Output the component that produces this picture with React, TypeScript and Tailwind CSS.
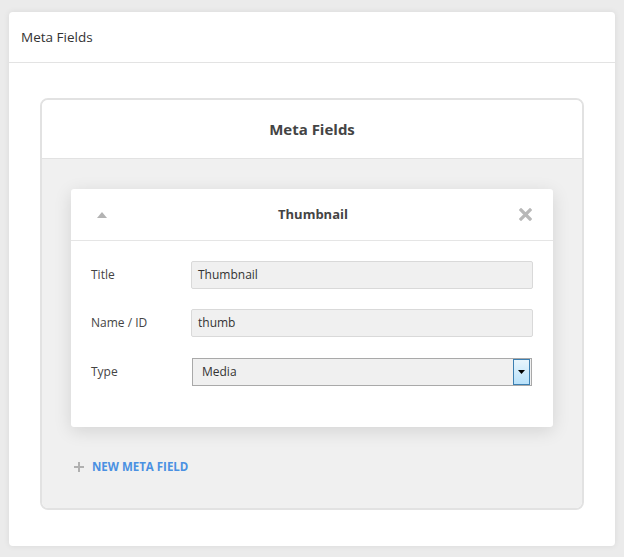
const font = { fontFamily: '"Open Sans", "Liberation Sans", sans-serif' };

/* ─── Labelled row ───────────────────────────────────────── */
function Row({ label, children }: { label: string; children: React.ReactNode }) {
  return (
    <div className="flex items-center">
      <div className="w-[100px] text-[12px] text-[#444]">{label}</div>
      <div className="flex-1">{children}</div>
    </div>
  );
}

function TextBox({ value }: { value: string }) {
  return (
    <div className="flex h-[28px] items-center rounded-[2px] border border-[#d9d9d9] bg-[#f0f0f0] px-[6px] text-[12px] text-[#333]">
      {value}
    </div>
  );
}

function SelectBox({ value }: { value: string }) {
  return (
    <div className="ml-px mr-px flex h-[28px] items-center border border-[#a9a9a9] bg-[#f0f0f0] pl-[9px] text-[12px] text-[#333]">
      <span className="flex-1">{value}</span>
      <span className="mr-px flex h-[26px] w-[17px] items-center justify-center border border-[#3c7fb1] bg-gradient-to-b from-[#e8f5fc] to-[#b8e1fa]">
        <svg width="7" height="4" viewBox="0 0 7 4">
          <path d="M0 0h7L3.5 4z" fill="#000" />
        </svg>
      </span>
    </div>
  );
}

export default function App() {
  return (
    <div style={font} className="min-h-[557px] w-[624px] bg-[#ebebeb] px-[9px] pt-[12px] pb-[13px]">
      <div className="rounded-[4px] bg-white shadow-[0_0_6px_rgba(0,0,0,0.08)]">
        <div className="flex h-[51px] items-center border-b border-[#e3e3e3] px-[12px] text-[13.5px] text-[#333]">
          Meta Fields
        </div>

        <div className="px-[31px] pt-[35px] pb-[36px]">
          <div className="overflow-hidden rounded-[8px] border-2 border-[#e2e2e2]">
            <div className="flex h-[59px] items-center justify-center border-b border-[#e2e2e2] bg-white text-[15px] font-bold text-[#444]">
              Meta Fields
            </div>

            <div className="bg-[#f0f0f0] px-[29px] pt-[30px] pb-[33px]">
              <div className="rounded-[3px] bg-white shadow-[0_4px_18px_rgba(0,0,0,0.12)]">
                <div className="flex h-[52px] items-center border-b border-[#e5e5e5] pl-[26px] pr-[21px]">
                  <svg width="10" height="6" viewBox="0 0 10 6">
                    <path d="M0 6L5 0l5 6z" fill="#b3b3b3" />
                  </svg>
                  <div className="flex-1 text-center text-[13px] font-bold text-[#444]">Thumbnail</div>
                  <svg width="13" height="13" viewBox="0 0 13 13">
                    <path d="M2 2l9 9M11 2l-9 9" stroke="#b8b8b8" strokeWidth="3.2" strokeLinecap="square" />
                  </svg>
                </div>

                <div className="flex flex-col gap-[20px] px-[20px] pt-[20px] pb-[41px]">
                  <Row label="Title"><TextBox value="Thumbnail" /></Row>
                  <Row label="Name / ID"><TextBox value="thumb" /></Row>
                  <div className="pt-px">
                    <Row label="Type"><SelectBox value="Media" /></Row>
                  </div>
                </div>
              </div>

              <div className="mt-[31px] flex items-center gap-[8px] pl-[3px]">
                <svg width="10" height="10" viewBox="0 0 10 10">
                  <path d="M5 0v10M0 5h10" stroke="#b0b0b0" strokeWidth="2" />
                </svg>
                <span className="text-[11.5px] font-bold text-[#4a90e2]">NEW META FIELD</span>
              </div>
            </div>
          </div>
        </div>
      </div>
    </div>
  );
}
